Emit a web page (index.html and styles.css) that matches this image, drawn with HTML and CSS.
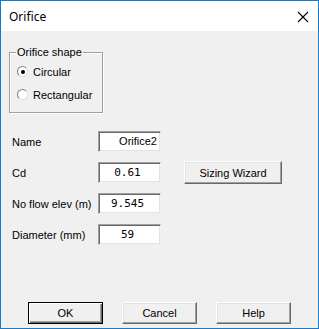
FILE: index.html
```html
<!DOCTYPE html>
<html lang="en">
<head>
    <meta charset="UTF-8">
    <title>Orifice</title>
    <link rel="stylesheet" href="styles.css">
</head>
<body>
    <div class="window">
        <div class="titlebar">
            <span class="title">Orifice</span>
            <svg class="close" width="12" height="12" viewBox="0 0 12 12">
                <path d="M1 1 L11 11 M11 1 L1 11" stroke="#000" stroke-width="1.1" fill="none"/>
            </svg>
        </div>
        <div class="content">
            <!-- Orifice shape group -->
            <div class="group">
                <span class="group-title">Orifice shape</span>
                <label class="radio"><span class="dot checked"></span>Circular</label>
                <label class="radio"><span class="dot"></span>Rectangular</label>
            </div>

            <div class="fields">
                <span class="lbl">Name</span>
                <div class="box name">Orifice2</div>
                <span></span>

                <span class="lbl">Cd</span>
                <div class="box num">0.61</div>
                <button class="btn wizard">Sizing Wizard</button>

                <span class="lbl">No flow elev (m)</span>
                <div class="box num">9.545</div>
                <span></span>

                <span class="lbl">Diameter (mm)</span>
                <div class="box num">59</div>
                <span></span>
            </div>

            <div class="buttons">
                <button class="btn default">OK</button>
                <button class="btn">Cancel</button>
                <button class="btn">Help</button>
            </div>
        </div>
    </div>
</body>
</html>
```

FILE: styles.css
```css
body {
    margin: 0;
    padding: 0;
    background-color: #f0f0f0;
    font-family: "Liberation Sans", Arial, sans-serif;
    font-size: 11px;
    color: #000;
}
.window {
    width: 319px;
    height: 329px;
    box-sizing: border-box;
    border: 1px solid #1979ca;
    display: flex;
    flex-direction: column;
}
.titlebar {
    height: 30px;
    background-color: #fff;
    display: flex;
    align-items: center;
    justify-content: space-between;
    padding: 0 9px 0 8px;
}
.title {
    font-family: "Noto Sans", sans-serif;
    font-size: 12px;
}
.close {
    margin-top: 1px;
}
.content {
    flex: 1;
    background-color: #f0f0f0;
    display: flex;
    flex-direction: column;
    padding: 0 0 0 8px;
}
.group {
    width: 92px;
    height: 59px;
    margin-top: 21px;
    border: 1px solid #a0a0a0;
    box-shadow: inset 1px 1px #fff, 1px 1px #fff;
    display: flex;
    flex-direction: column;
}
.group-title {
    align-self: flex-start;
    margin: -7px 0 0 6px;
    padding: 0 1px;
    line-height: 13px;
    background-color: #f0f0f0;
}
.radio {
    display: flex;
    align-items: center;
    gap: 5px;
    margin-left: 7px;
    height: 13px;
    margin-top: 6px;
}
.radio + .radio {
    margin-top: 10px;
}
.dot {
    width: 9px;
    height: 9px;
    border-radius: 50%;
    background-color: #fff;
    border: 1px solid;
    border-color: #808080 #e0e0e0 #e0e0e0 #808080;
    display: flex;
    align-items: center;
    justify-content: center;
}
.dot.checked::after {
    content: "";
    width: 4px;
    height: 4px;
    border-radius: 50%;
    background-color: #000;
}
.fields {
    display: grid;
    grid-template-columns: 86px 63px 98px;
    row-gap: 10px;
    grid-auto-rows: 21px;
    align-items: center;
    margin: 18px 0 0 3px;
}
.box {
    height: 21px;
    box-sizing: border-box;
    background-color: #fff;
    border: 1px solid;
    border-color: #a0a0a0 #f0f0f0 #f0f0f0 #a0a0a0;
    box-shadow: inset 1px 1px #696969, inset -1px -1px #e3e3e3;
    line-height: 19px;
}
.box.name {
    text-align: right;
    padding-right: 3px;
}
.box.num {
    text-align: center;
    font-family: "DejaVu Sans Mono", monospace;
    padding-right: 4px;
}
.btn {
    font-family: "Liberation Sans", Arial, sans-serif;
    font-size: 11px;
    background-color: #f0f0f0;
    border: 1px solid;
    border-color: #fff #696969 #696969 #fff;
    box-shadow: inset -1px -1px #a0a0a0, inset 1px 1px #e3e3e3;
    padding: 0;
    height: 22px;
    color: #000;
}
.wizard {
    height: 23px;
    width: 98px;
    margin-left: 23px;
}
.buttons {
    display: flex;
    gap: 19px;
    margin: auto 0 4px 19px;
}
.buttons .btn {
    width: 75px;
}
.btn.default {
    border-color: #000;
    box-shadow: inset 1px 1px #fff, inset -1px -1px #696969, inset -2px -2px #a0a0a0;
}
```
